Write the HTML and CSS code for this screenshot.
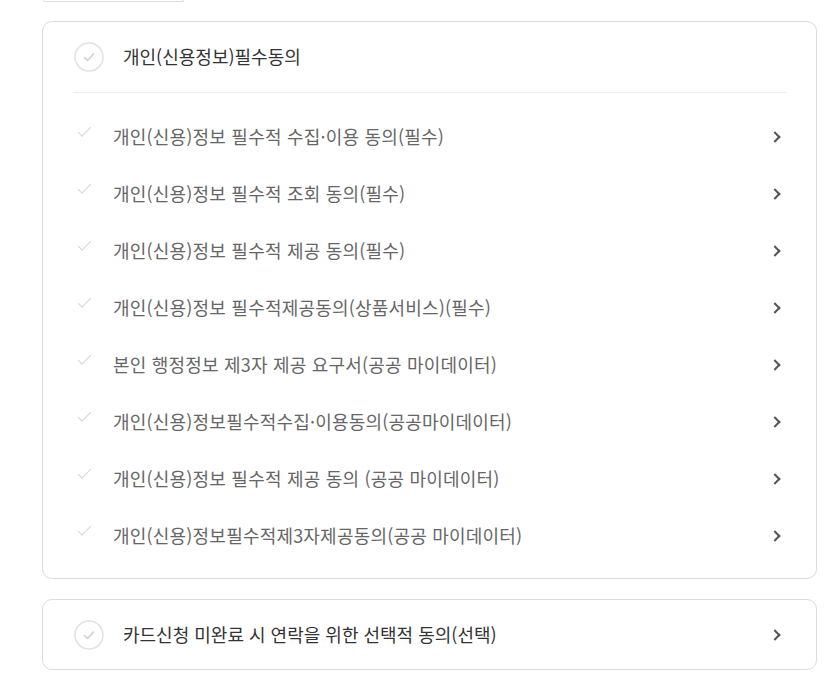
FILE: index.html
```html
<!DOCTYPE html>
<html lang="ko">
<head>
  <meta charset="UTF-8" />
  <title>약관 동의</title>
  <link rel="stylesheet" href="styles.css">
</head>
<body>
  <div class="wrap">
    <div class="prev-box"></div>

    <div class="card">
      <div class="card-head">
        <span class="circle-check">
          <svg viewBox="0 0 30 30" width="30" height="30"><circle cx="15" cy="15" r="14" fill="none" stroke="#e2e2e2" stroke-width="1.5"/><path d="M10.5 15.5l3 3 6-6.5" fill="none" stroke="#cfcfcf" stroke-width="1.6" stroke-linecap="round" stroke-linejoin="round"/></svg>
        </span>
        <span class="head-title">개인(신용정보)필수동의</span>
      </div>

      <ul class="agree-list">
        <li class="agree-item"><span class="mini-check"></span><span class="agree-text">개인(신용)정보 필수적 수집·이용 동의(필수)</span><span class="chev"></span></li>
        <li class="agree-item"><span class="mini-check"></span><span class="agree-text">개인(신용)정보 필수적 조회 동의(필수)</span><span class="chev"></span></li>
        <li class="agree-item"><span class="mini-check"></span><span class="agree-text">개인(신용)정보 필수적 제공 동의(필수)</span><span class="chev"></span></li>
        <li class="agree-item"><span class="mini-check"></span><span class="agree-text">개인(신용)정보 필수적제공동의(상품서비스)(필수)</span><span class="chev"></span></li>
        <li class="agree-item"><span class="mini-check"></span><span class="agree-text">본인 행정정보 제3자 제공 요구서(공공 마이데이터)</span><span class="chev"></span></li>
        <li class="agree-item"><span class="mini-check"></span><span class="agree-text">개인(신용)정보필수적수집·이용동의(공공마이데이터)</span><span class="chev"></span></li>
        <li class="agree-item"><span class="mini-check"></span><span class="agree-text">개인(신용)정보 필수적 제공 동의 (공공 마이데이터)</span><span class="chev"></span></li>
        <li class="agree-item"><span class="mini-check"></span><span class="agree-text">개인(신용)정보필수적제3자제공동의(공공 마이데이터)</span><span class="chev"></span></li>
      </ul>
    </div>

    <div class="card card-single">
      <div class="card-head no-line">
        <span class="circle-check">
          <svg viewBox="0 0 30 30" width="30" height="30"><circle cx="15" cy="15" r="14" fill="none" stroke="#e2e2e2" stroke-width="1.5"/><path d="M10.5 15.5l3 3 6-6.5" fill="none" stroke="#cfcfcf" stroke-width="1.6" stroke-linecap="round" stroke-linejoin="round"/></svg>
        </span>
        <span class="head-title">카드신청 미완료 시 연락을 위한 선택적 동의(선택)</span>
        <span class="chev"></span>
      </div>
    </div>
  </div>
</body>
</html>
```

FILE: styles.css
```css
body {
  margin: 0;
  background: #fff;
  font-family: "Noto Sans CJK KR", "Noto Sans", sans-serif;
}

.wrap {
  padding: 0 8px 0 42px;
}

.prev-box {
  width: 139px;
  height: 1px;
  margin-left: 1px;
  border: 1px solid #ddd;
  border-top: none;
  border-radius: 0 0 8px 8px;
  margin-bottom: 19px;
}

.card {
  border: 1px solid #dcdcdc;
  border-radius: 10px;
  padding: 0 30px;
  margin-bottom: 20px;
}

.card-head {
  display: flex;
  align-items: center;
  height: 70px;
  border-bottom: 1px solid #ececec;
}

.card-head.no-line {
  border-bottom: none;
  height: 69px;
}

.circle-check {
  display: flex;
  width: 30px;
  height: 30px;
  margin-left: 1px;
  margin-right: 19px;
}

.head-title {
  flex: 1;
  font-size: 18px;
  color: #333;
  margin-top: -2px;
}

.agree-list {
  list-style: none;
  margin: 0;
  padding: 15px 0 14px;
}

.agree-item {
  display: flex;
  align-items: center;
  height: 57px;
}

.mini-check {
  width: 12px;
  height: 5px;
  margin: 0 22px 14px 5px;
  border-left: 1.5px solid #d6d6d6;
  border-bottom: 1.5px solid #d6d6d6;
  transform: rotate(-45deg);
}

.agree-text {
  flex: 1;
  font-size: 18px;
  color: #666;
  letter-spacing: 0.2px;
  margin-top: -2px;
}

.chev {
  width: 6px;
  height: 6px;
  margin-right: 7px;
  border-top: 2px solid #555;
  border-right: 2px solid #555;
  transform: rotate(45deg);
}
```
